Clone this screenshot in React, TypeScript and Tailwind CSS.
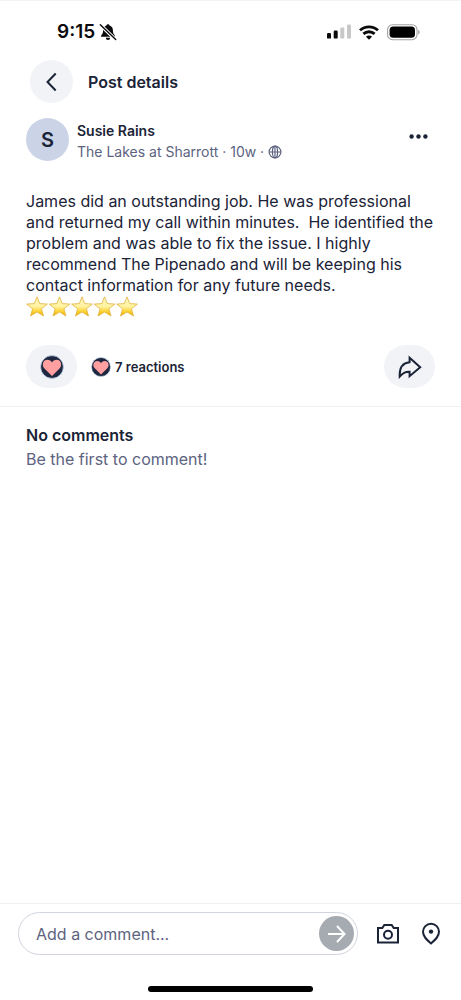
function MutedBell() {
  return (
    <svg viewBox="0 0 18 18" className="size-[18px]" aria-hidden="true">
      <path d="M9 1.200c.9 0 1.500.6 1.600 1.300 2.100.6 3.300 2.400 3.300 4.800 0 3.200.9 4 1.900 5.100.5.6.3 1.400-.7 1.400H2.900c-1 0-1.200-.8-.7-1.400 1-1.100 1.900-1.900 1.900-5.100 0-2.400 1.200-4.200 3.300-4.800C7.500 1.800 8.100 1.200 9 1.200z" fill="#0b0b0d" />
      <path d="M6.800 14.800h4.400a2.200 2.200 0 0 1-4.400 0z" fill="#0b0b0d" />
      <path d="M2 2.600L16.200 16.200" stroke="#fff" strokeWidth="3.400" />
      <path d="M1.300 1.700L16.700 16.400" stroke="#0b0b0d" strokeWidth="1.400" strokeLinecap="round" />
    </svg>
  );
}

function Signal() {
  return (
    <svg viewBox="0 0 24 16" className="h-4 w-6" aria-hidden="true">
      <rect x="0" y="9" width="4" height="5.600" rx="1.200" fill="#0b0b0d" />
      <rect x="6.700" y="6.600" width="4" height="8" rx="1.200" fill="#0b0b0d" />
      <rect x="13.300" y="3.600" width="4" height="11" rx="1.200" fill="#c8c8c8" />
      <rect x="20" y=".6" width="4" height="14" rx="1.200" fill="#c8c8c8" />
    </svg>
  );
}

function Wifi() {
  return (
    <svg viewBox="0 0 20 15" className="h-[15px] w-5" fill="none" stroke="#0b0b0d" strokeWidth="2.800" aria-hidden="true">
      <path d="M1 5.300C6 .6 14 .6 19 5.300" />
      <path d="M4.400 8.900c3.200-2.900 8-2.900 11.200 0" />
      <path d="M10 10.600c1.200 0 2.200.4 3 1.100L10 14.800l-3-3.100c.8-.7 1.800-1.100 3-1.100z" fill="#0b0b0d" stroke="none" />
    </svg>
  );
}

function Battery() {
  return (
    <svg viewBox="0 0 33 17" className="h-[17px] w-[33px]" aria-hidden="true">
      <rect x=".6" y=".7" width="29.400" height="15" rx="5" fill="none" stroke="#a3a3a3" strokeWidth="1.100" />
      <rect x="2.600" y="2.600" width="25.400" height="11.200" rx="3.600" fill="#000" />
      <path d="M31.300 5.800v4.800c1.700-.7 1.700-4.100 0-4.800z" fill="#8f8f8f" />
    </svg>
  );
}

function Globe() {
  return (
    <svg viewBox="0 0 14 14" className="size-[14px]" fill="none" stroke="#5c6380" strokeWidth="1.200" aria-hidden="true">
      <circle cx="7" cy="7" r="5.900" />
      <ellipse cx="7" cy="7" rx="2.600" ry="5.900" />
      <path d="M1.100 7h11.800M7 1.100v11.800" />
    </svg>
  );
}

function Stars() {
  return (
    <svg viewBox="0 0 112 21" className="h-[21px] w-[112px]" role="img" aria-label="Five stars">
      <defs>
        <linearGradient id="gold" x1="0" y1="0" x2="0" y2="1">
          <stop offset="0" stopColor="#fff6bd" />
          <stop offset=".5" stopColor="#fff3a2" />
          <stop offset=".78" stopColor="#fbd02c" />
          <stop offset="1" stopColor="#e9a90e" />
        </linearGradient>
      </defs>
      {[0, 22.5, 45, 67.5, 90].map((x) => (
        <path
          key={x}
          transform={`translate(${x} 0)`}
          d="M11 .8L13.700 7.600L21.400 8.100L15.400 12.800L17.500 20L11 16L4.500 20L6.600 12.800L.6 8.100L8.300 7.600Z"
          fill="url(#gold)"
          stroke="#dfb23f"
          strokeWidth=".8"
          strokeLinejoin="round"
        />
      ))}
    </svg>
  );
}

function Heart({ className }: { className: string }) {
  return (
    <svg viewBox="0 0 24 24" className={className} aria-hidden="true">
      <circle cx="12" cy="12" r="11.400" fill="#1e2740" stroke="#c9d8ee" strokeWidth=".8" />
      <path d="M12 21L4.500 13.600C1.200 10 3.300 4.800 7.400 4.800C9.400 4.800 11 5.700 12 7.400C13 5.700 14.600 4.800 16.600 4.800C20.700 4.800 22.800 10 19.500 13.600Z" fill="#ff9f9f" />
    </svg>
  );
}

function Share() {
  return (
    <svg viewBox="0 0 24 24" className="size-6" fill="none" stroke="#1b2337" strokeWidth="2" aria-hidden="true">
      <path d="M11.600 2.800L22.200 12.200L11.600 21.200V16.800C7.500 16.500 4.400 18.500 1.700 21.600C1.300 13.600 4.400 7.800 11.600 7.200Z" />
    </svg>
  );
}

export default function App() {
  return (
    <div className="flex min-h-screen flex-col border-t border-[#f3f3f5] bg-white font-['Inter','Liberation_Sans',sans-serif] text-[#1b2337]">
      <div className="flex items-center justify-between pt-[21px] pr-[41px] pl-[57px]">
        <div className="flex items-center gap-1">
          <span className="text-[19px] leading-5 font-semibold text-[#0b0b0d]">9:15</span>
          <MutedBell />
        </div>
        <div className="flex items-center gap-2">
          <Signal />
          <Wifi />
          <Battery />
        </div>
      </div>

      <header className="flex items-center gap-[15px] pt-[18px] pr-[26px] pl-[30px]">
        <button type="button" aria-label="Back" className="flex size-[43px] items-center justify-center rounded-full bg-[#f1f3f7]">
          <svg viewBox="0 0 12 20" className="h-5 w-3" fill="none" stroke="#1b2337" strokeWidth="2" aria-hidden="true">
            <path d="M9.700 1.500L1.500 10L9.700 18.500" />
          </svg>
        </button>
        <h1 className="text-base leading-5 font-semibold">Post details</h1>
      </header>

      <main className="flex-1">
        <article className="border-b border-[#eff0f4] px-[26px] pt-[15px] pb-[18px]">
          <div className="flex items-start">
            <div className="flex size-[43px] items-center justify-center rounded-full bg-[#cbd3e7] text-xl font-semibold">S</div>
            <div className="ml-2 flex-1 pt-[3px] text-sm">
              <h2 className="leading-5 font-semibold">Susie Rains</h2>
              <p className="flex items-center gap-1 leading-[22px] text-[#5c6380]">
                <span>The Lakes at Sharrott · 10w ·</span>
                <Globe />
              </p>
            </div>
            <button type="button" aria-label="More options" className="flex h-9 items-center px-[7px]">
              <svg viewBox="0 0 19 5" className="h-[5px] w-[19px]" fill="#1b2337" aria-hidden="true">
                <circle cx="2.600" cy="2.500" r="2.200" />
                <circle cx="9.500" cy="2.500" r="2.200" />
                <circle cx="16.400" cy="2.500" r="2.200" />
              </svg>
            </button>
          </div>

          <p className="mt-7 text-base leading-[21px]">
            James did an outstanding job. He was professional
            <br />
            and returned my call within minutes.&nbsp; He identified the
            <br />
            problem and was able to fix the issue. I highly
            <br />
            recommend The Pipenado and will be keeping his
            <br />
            contact information for any future needs.
          </p>
          <Stars />

          <div className="mt-7 flex items-center">
            <button type="button" aria-label="React" className="flex h-[43px] w-[51px] items-center justify-center rounded-full bg-[#f1f3f7]">
              <Heart className="size-6" />
            </button>
            <div className="ml-[14px] flex items-center gap-1">
              <Heart className="size-5" />
              <span className="text-[13px] leading-5 font-semibold">7 reactions</span>
            </div>
            <button type="button" aria-label="Share" className="ml-auto flex h-[43px] w-[51px] items-center justify-center rounded-full bg-[#f1f3f7]">
              <Share />
            </button>
          </div>
        </article>

        <section className="px-[26px] pt-4 text-base leading-6">
          <h2 className="font-semibold">No comments</h2>
          <p className="text-[#5c6380]">Be the first to comment!</p>
        </section>
      </main>

      <footer className="border-t border-[#eff0f4] pt-2">
        <div className="flex items-center pr-[19px] pl-[18px]">
          <form className="flex h-[43px] flex-1 items-center rounded-full border border-[#cfd4de] pr-[3px] pl-[17px]">
            <input
              type="text"
              aria-label="Add a comment"
              placeholder="Add a comment..."
              className="w-0 flex-1 bg-transparent text-base outline-none placeholder:text-[#5c6380]"
            />
            <button type="button" aria-label="Send" className="flex size-[35px] items-center justify-center rounded-full bg-[#a6aab1]">
              <svg viewBox="0 0 20 20" className="size-5" fill="none" stroke="#fff" strokeWidth="2" aria-hidden="true">
                <path d="M1 10H17.500M10 2L17.500 10L10 18" />
              </svg>
            </button>
          </form>
          <button type="button" aria-label="Add photo" className="ml-[18px]">
            <svg viewBox="0 0 24 24" className="size-6" fill="none" stroke="#1b2337" strokeWidth="2" aria-hidden="true">
              <path d="M2 6H6.300L8.300 3H15.700L17.700 6H22V20.500H2Z" />
              <circle cx="12" cy="12.700" r="4" />
            </svg>
          </button>
          <button type="button" aria-label="Add location" className="ml-5">
            <svg viewBox="0 0 22 24" className="h-6 w-[22px]" fill="none" stroke="#1b2337" strokeWidth="2" aria-hidden="true">
              <path d="M11 21.500C7 18 3 14.600 3 9.800A8 8 0 0 1 19 9.800C19 14.600 15 18 11 21.500Z" />
              <circle cx="11" cy="9.600" r="2.200" fill="#1b2337" stroke="none" />
            </svg>
          </button>
        </div>
        <div className="mx-auto mt-[31px] mb-2 h-[6px] w-[165px] rounded-full bg-black" />
      </footer>
    </div>
  );
}
